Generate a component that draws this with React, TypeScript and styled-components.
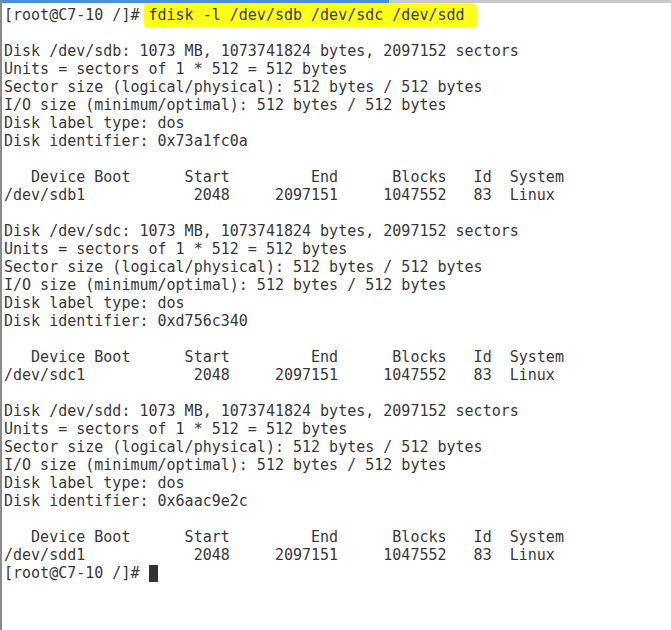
import React from "react";
import styled, { createGlobalStyle } from "styled-components";

const Global = createGlobalStyle`
  html, body { margin: 0; padding: 0; background: #ffffff; }
`;

const Window = styled.div`
  width: 671px;
  height: 630px;
  box-sizing: border-box;
  border-left: 2px solid #8a8a8a;
  display: flex;
  flex-direction: column;
  background: #ffffff;
  overflow: hidden;
`;

const TopBar = styled.div`
  display: flex;
  height: 3px;
  flex: none;
`;

const BarSegment = styled.div<{ $color: string; $width?: number }>`
  background: ${(p) => p.$color};
  ${(p) => (p.$width ? `width: ${p.$width}px; flex: none;` : `flex: 1;`)}
`;

const Terminal = styled.div`
  padding: 3px 0 0 2px;
  font-family: "DejaVu Sans Mono", "Liberation Mono", monospace;
  font-size: 15px;
  line-height: 18px;
  color: #383838;
`;

const Line = styled.div`
  white-space: pre;
  height: 18px;
`;

const Highlight = styled.span`
  background: #ffff1a;
  padding: 3px 12px 3px 5px;
  margin-left: -5px;
  border-radius: 2px 6px 3px 2px;
`;

const Cursor = styled.span`
  display: inline-block;
  width: 9px;
  height: 17px;
  background: #2e3436;
  vertical-align: -4px;
`;

const PROMPT = "[root@C7-10 /]# ";

const disk = (name: string, id: string) => [
  `Disk /dev/${name}: 1073 MB, 1073741824 bytes, 2097152 sectors`,
  "Units = sectors of 1 * 512 = 512 bytes",
  "Sector size (logical/physical): 512 bytes / 512 bytes",
  "I/O size (minimum/optimal): 512 bytes / 512 bytes",
  "Disk label type: dos",
  `Disk identifier: ${id}`,
  "",
  "   Device Boot      Start         End      Blocks   Id  System",
  `/dev/${name}1            2048     2097151     1047552   83  Linux`,
];

const lines = [
  ...disk("sdb", "0x73a1fc0a"),
  "",
  ...disk("sdc", "0xd756c340"),
  "",
  ...disk("sdd", "0x6aac9e2c"),
];

export default function App() {
  return (
    <>
      <Global />
      <Window>
        <TopBar>
          <BarSegment $color="#4a90d9" $width={387} />
          <BarSegment $color="#c9c9c9" />
        </TopBar>
        <Terminal>
          <Line>
            {PROMPT}
            <Highlight>fdisk -l /dev/sdb /dev/sdc /dev/sdd</Highlight>
          </Line>
          <Line> </Line>
          {lines.map((l, i) => (
            <Line key={i}>{l || " "}</Line>
          ))}
          <Line>
            {PROMPT}
            <Cursor />
          </Line>
        </Terminal>
      </Window>
    </>
  );
}
